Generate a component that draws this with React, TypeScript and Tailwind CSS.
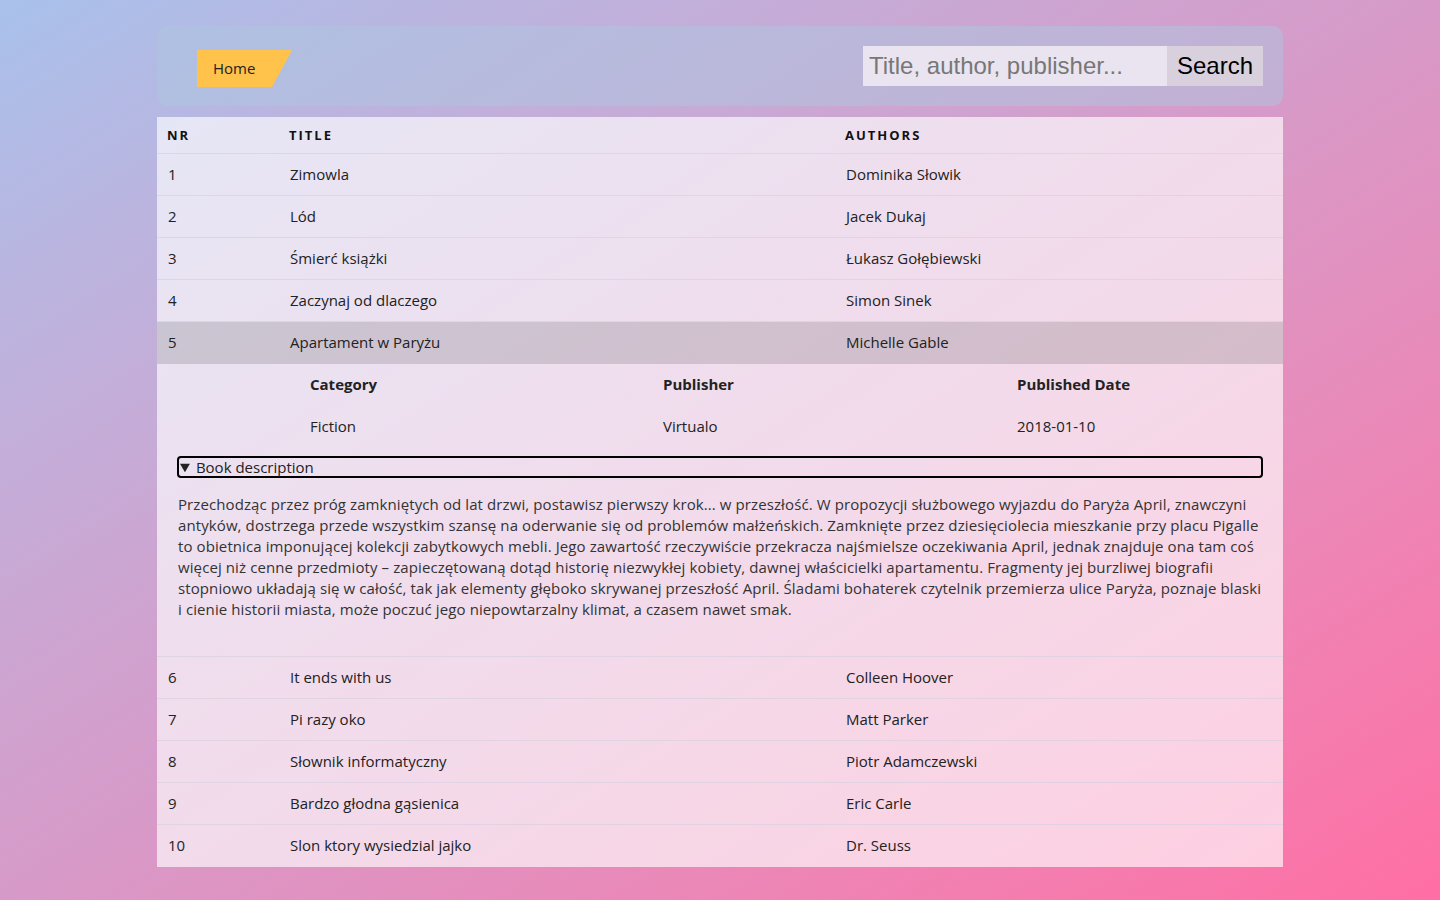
import React from "react";

const books = [
  { nr: 1, title: "Zimowla", author: "Dominika Słowik" },
  { nr: 2, title: "Lód", author: "Jacek Dukaj" },
  { nr: 3, title: "Śmierć książki", author: "Łukasz Gołębiewski" },
  { nr: 4, title: "Zaczynaj od dlaczego", author: "Simon Sinek" },
  { nr: 5, title: "Apartament w Paryżu", author: "Michelle Gable" },
  { nr: 6, title: "It ends with us", author: "Colleen Hoover" },
  { nr: 7, title: "Pi razy oko", author: "Matt Parker" },
  { nr: 8, title: "Słownik informatyczny", author: "Piotr Adamczewski" },
  { nr: 9, title: "Bardzo głodna gąsienica", author: "Eric Carle" },
  { nr: 10, title: "Slon ktory wysiedzial jajko", author: "Dr. Seuss" },
];

const description =
  "Przechodząc przez próg zamkniętych od lat drzwi, postawisz pierwszy krok... w przeszłość. W propozycji służbowego wyjazdu do Paryża April, znawczyni antyków, dostrzega przede wszystkim szansę na oderwanie się od problemów małżeńskich. Zamknięte przez dziesięciolecia mieszkanie przy placu Pigalle to obietnica imponującej kolekcji zabytkowych mebli. Jego zawartość rzeczywiście przekracza najśmielsze oczekiwania April, jednak znajduje ona tam coś więcej niż cenne przedmioty – zapieczętowaną dotąd historię niezwykłej kobiety, dawnej właścicielki apartamentu. Fragmenty jej burzliwej biografii stopniowo układają się w całość, tak jak elementy głęboko skrywanej przeszłość April. Śladami bohaterek czytelnik przemierza ulice Paryża, poznaje blaski i cienie historii miasta, może poczuć jego niepowtarzalny klimat, a czasem nawet smak.";

const Row = ({ nr, title, author, active, last }: { nr: number; title: string; author: string; active?: boolean; last?: boolean }) => (
  <div
    className={`grid grid-cols-[122px_556px_1fr] h-[42px] items-center border-b text-[15px] text-[#222] ${
      active ? "bg-black/[0.13] border-transparent" : last ? "border-transparent" : "border-[#d9d0df]/70"
    }`}
  >
    <div className="pl-[11px]">{nr}</div>
    <div className="pl-[11px]">{title}</div>
    <div className="pl-[11px]">{author}</div>
  </div>
);

const Details = () => (
  <div className="border-b border-[#d9d0df]/70 pb-[36px]">
    <div className="grid grid-cols-[353px_354px_1fr] pl-[153px] text-[15px] text-[#222]">
      <div className="h-[41px] flex items-center font-bold">Category</div>
      <div className="h-[41px] flex items-center font-bold">Publisher</div>
      <div className="h-[41px] flex items-center font-bold">Published Date</div>
      <div className="h-[42px] flex items-center">Fiction</div>
      <div className="h-[42px] flex items-center">Virtualo</div>
      <div className="h-[42px] flex items-center">2018-01-10</div>
    </div>
    <details open className="mx-[20px] mt-[9px] text-[15px] text-[#222]">
      <summary className="border-2 border-black rounded-[4px] h-[22px] leading-[18px] pl-[1px] cursor-pointer">
        Book description
      </summary>
      <p className="mt-[16px] pl-[1px] leading-[21px] tracking-[0.1px] text-[#333]">{description}</p>
    </details>
  </div>
);

const App = () => {
  return (
    <div
      className="min-h-[900px] w-full bg-gradient-to-br from-[#a8c1eb] via-[#d79ac8] to-[#ff6ea4] pt-[26px] pb-[34px]"
      style={{ fontFamily: '"Open Sans", "Noto Sans", sans-serif' }}
    >
      <div className="w-[1126px] mx-auto">
        <div className="h-[80px] rounded-[10px] bg-[#adc6e0]/50 flex items-center justify-between pl-[40px] pr-[20px]">
          <a
            href="#"
            className="mt-[5px] h-[37px] w-[95px] bg-[#ffc24a] flex items-center pl-[16px] text-[15px] text-[#222] [clip-path:polygon(0_0,100%_0,79%_100%,0_100%)]"
          >
            Home
          </a>
          <div className="flex h-[40px]" style={{ fontFamily: '"Liberation Sans", Arial, sans-serif' }}>
            <input
              className="w-[304px] h-full bg-[#e9e4ef] px-[6px] text-[24px] text-black placeholder:text-[#777] outline-none"
              placeholder="Title, author, publisher..."
            />
            <button className="w-[96px] h-full bg-[#d8d0dd] text-[24px] text-black">Search</button>
          </div>
        </div>

        <div className="mt-[11px] bg-white/65">
          <div className="grid grid-cols-[122px_556px_1fr] h-[37px] items-center border-b border-[#d9d0df]/70 text-[13px] font-bold tracking-[2px] text-[#111]">
            <div className="pl-[10px] pt-[1px]">NR</div>
            <div className="pl-[10px] pt-[1px]">TITLE</div>
            <div className="pl-[10px] pt-[1px]">AUTHORS</div>
          </div>
          {books.map((b) => (
            <React.Fragment key={b.nr}>
              <Row {...b} active={b.nr === 5} last={b.nr === 10} />
              {b.nr === 5 && <Details />}
            </React.Fragment>
          ))}
        </div>
      </div>
    </div>
  );
};

export default App;
